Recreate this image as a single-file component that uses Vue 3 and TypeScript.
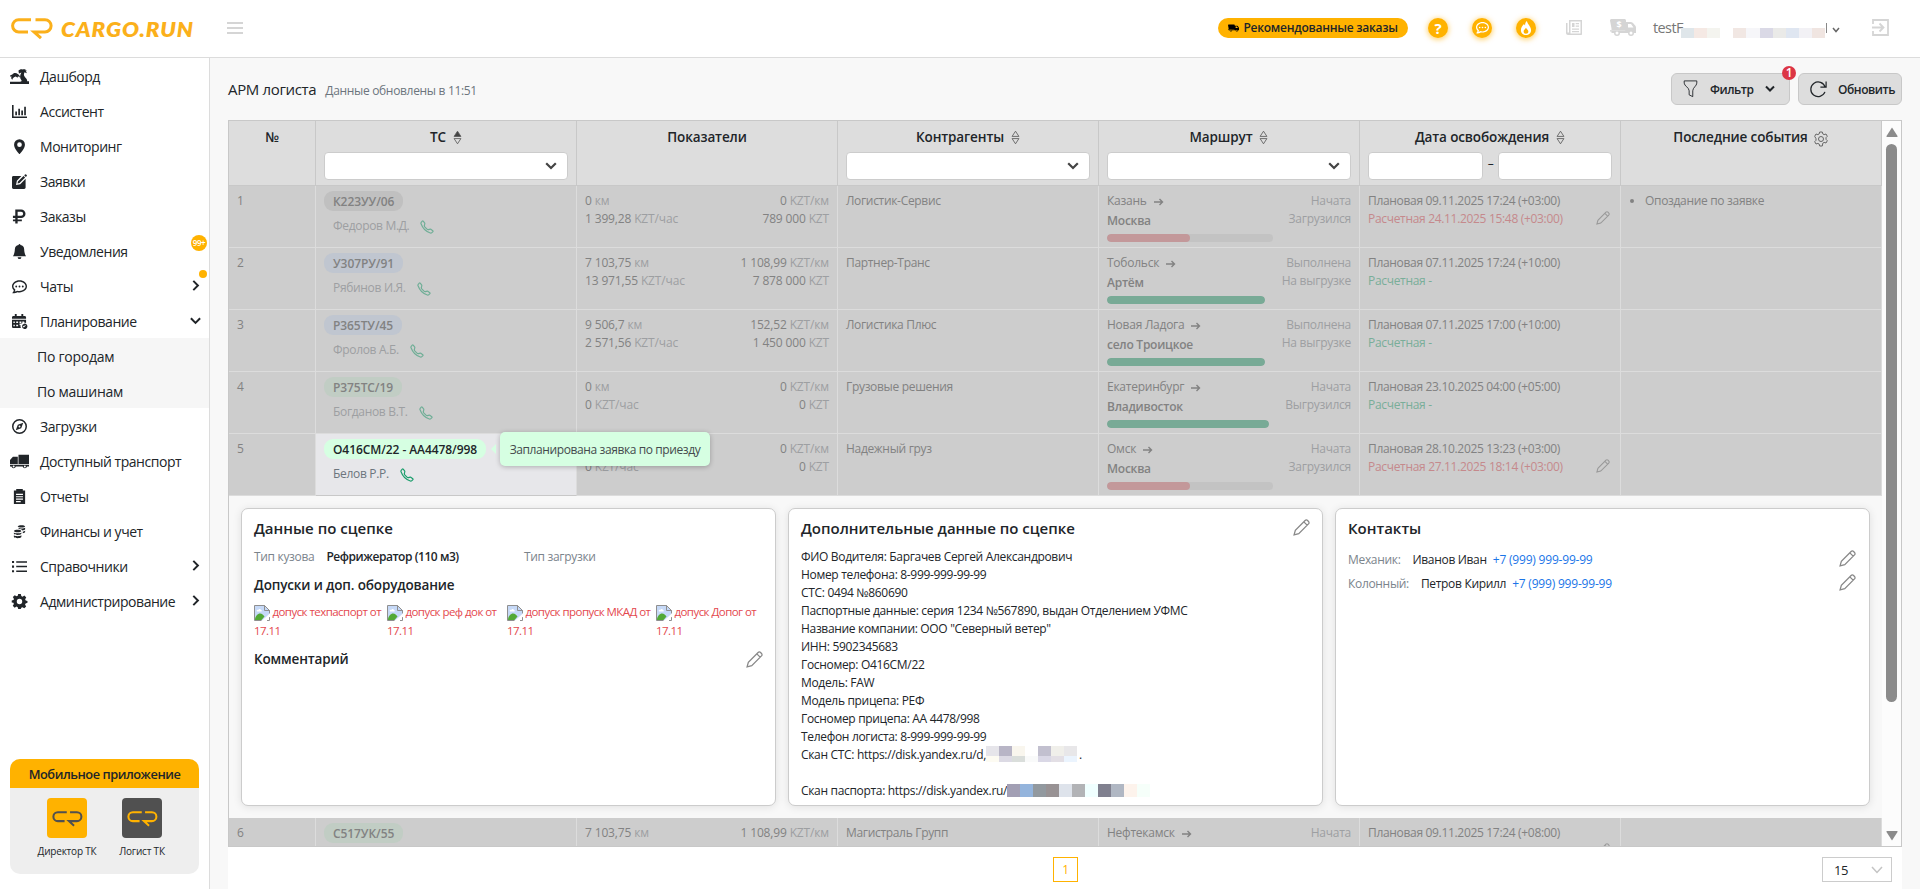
<template>
  <div class="app">
    <header class="header">
      <div class="brand">
        <svg class="brand-mark" viewBox="0 0 42 22" aria-hidden="true"><path :d="logoPath" /></svg>
        <span class="brand-name">CARGO.RUN</span>
      </div>
      <svg class="burger" viewBox="0 0 16 12" aria-hidden="true"><path d="M0 1h16M0 6h16M0 11h16" /></svg>
      <div class="header-right">
        <div class="recommend">
          <svg class="recommend-icon" viewBox="0 0 26 17" aria-hidden="true"><path :d="icons.truck" /></svg>
          <span>Рекомендованные заказы</span>
        </div>
        <span class="round question">?</span>
        <span class="round">
          <svg viewBox="0 0 16 16" width="13" height="13"><path :d="icons.chat" /></svg>
        </span>
        <span class="round">
          <svg viewBox="0 0 16 16" width="14" height="14"><path fill-rule="evenodd" :d="icons.fire" /></svg>
        </span>
        <svg class="news" viewBox="0 0 16 15" aria-hidden="true">
          <path fill-rule="evenodd" :d="icons.news" />
        </svg>
        <svg class="money-truck" viewBox="0 0 27 18" aria-hidden="true">
          <path fill-rule="evenodd" :d="icons.truck" />
          <text x="9" y="8.500">$</text>
        </svg>
        <div class="user">
          <span class="user-name">testF</span>
          <span class="mosaic user-mosaic">
            <i v-for="(c, i) in userMosaic" :key="i" :style="{ background: c }"></i>
          </span>
          <span class="user-tail"></span>
          <svg class="user-chevron" viewBox="0 0 8 6"><path d="M1 1l3 3.500L7 1" /></svg>
        </div>
        <svg class="exit" viewBox="0 0 17 17" aria-hidden="true">
          <path d="M1 5V1h15v15H1v-4M0 8.500h11M7.500 4.500l4 4-4 4" />
        </svg>
      </div>
    </header>

    <div class="body">
      <aside class="sidebar">
        <nav>
          <div
            v-for="item in menu"
            :key="item.label"
            class="menu-item"
            :class="{ sub: item.sub }"
          >
            <svg v-if="item.icon" class="menu-icon" :viewBox="item.box ?? '0 0 16 16'" :class="{ wide: item.box }">
              <path fill-rule="evenodd" :d="icons[item.icon]" />
            </svg>
            <span class="menu-label">{{ item.label }}</span>
            <svg v-if="item.arrow" class="menu-arrow" :class="item.arrow" viewBox="0 0 10 10">
              <path d="M3 .8L7.200 5 3 9.200" />
            </svg>
            <span v-if="item.badge" class="menu-badge">{{ item.badge }}</span>
            <span v-if="item.dot" class="menu-dot"></span>
          </div>
        </nav>
        <div class="mobile">
          <div class="mobile-title">Мобильное приложение</div>
          <div class="mobile-apps">
            <div v-for="a in apps" :key="a.name" class="mobile-app">
              <div class="mobile-logo" :class="a.theme">
                <svg viewBox="0 0 42 22"><path :d="logoPath" /></svg>
              </div>
              <span>{{ a.name }}</span>
            </div>
          </div>
        </div>
      </aside>

      <main class="content">
        <div class="toolbar">
          <h1>АРМ логиста</h1>
          <span class="updated">Данные обновлены в 11:51</span>
          <div class="toolbar-buttons">
            <button class="btn filter" type="button">
              <svg class="funnel" viewBox="0 0 16 20"><path d="M1 1h14v2.500c0 3-4.500 5-4.500 8.500v6.500l-4 -2V12C6.500 8.500 1 6.500 1 3.500z" /></svg>
              <span>Фильтр</span>
              <svg class="btn-chevron" viewBox="0 0 10 8"><path d="M1 1.500l4 4 4-4" /></svg>
              <span class="btn-badge">1</span>
            </button>
            <button class="btn refresh" type="button">
              <svg class="reload" viewBox="0 0 20 20"><path d="M16.800 12.500A7.700 7.700 0 1 1 17 7.500M18 1.500v6h-6" /></svg>
              <span>Обновить</span>
            </button>
          </div>
        </div>

        <section class="table">
          <div class="table-main">
            <div class="row head">
              <div v-for="col in columns" :key="col.title" class="cell">
                <div class="head-title">
                  <span>{{ col.title }}</span>
                  <svg v-if="col.sort" class="sort" viewBox="0 0 10 16">
                    <path d="M5 1l3.800 5.800H1.200z" :class="{ filled: col.sort === 'asc' }" />
                    <path d="M5 15L1.200 9.200h7.600z" />
                  </svg>
                  <svg v-if="col.gear" class="head-gear" viewBox="0 0 16 16">
                    <path :d="gearOutline" />
                    <circle cx="8" cy="8" r="2.500" />
                  </svg>
                </div>
                <div v-if="col.filter === 'select'" class="select">
                  <svg viewBox="0 0 12 8"><path d="M1.200 1.200L6 6l4.800-4.800" /></svg>
                </div>
                <div v-if="col.filter === 'range'" class="range">
                  <span class="input"></span>
                  <span class="dash">–</span>
                  <span class="input"></span>
                </div>
              </div>
            </div>

            <template v-for="r in rows" :key="r.n">
              <div class="row" :class="{ active: r.active }">
                <div class="cell num">{{ r.n }}</div>
                <div class="cell vehicle">
                  <span class="plate" :class="r.tone">
                    {{ r.plate }}
                    <span v-if="r.active" class="tooltip">Запланирована заявка по приезду</span>
                  </span>
                  <div v-if="r.driver" class="driver">
                    <span>{{ r.driver }}</span>
                    <svg viewBox="0 0 16 16"><path :d="phonePath" /></svg>
                  </div>
                </div>
                <div class="cell metrics">
                  <div><span>{{ r.km }} <em>км</em></span><span>{{ r.perKm }} <em>KZT/км</em></span></div>
                  <div v-if="r.total"><span>{{ r.perHour }} <em>KZT/час</em></span><span>{{ r.total }} <em>KZT</em></span></div>
                </div>
                <div class="cell">{{ r.client }}</div>
                <div class="cell route">
                  <div class="route-path">
                    <div class="from">
                      {{ r.from }}
                      <svg viewBox="0 0 10 8"><path d="M0 4h8.500M5.500 1l3 3-3 3" /></svg>
                    </div>
                    <template v-if="r.to">
                      <div class="to">{{ r.to }}</div>
                      <div class="track" :style="{ width: r.track + 'px' }">
                        <div class="fill" :class="r.late ? 'late' : 'ok'" :style="{ width: r.late ? '50%' : '100%' }"></div>
                      </div>
                    </template>
                  </div>
                  <div class="status">
                    <div>{{ r.state }}</div>
                    <div v-if="r.step">{{ r.step }}</div>
                  </div>
                </div>
                <div class="cell dates">
                  <div>Плановая {{ r.plan }}</div>
                  <div class="calc" :class="r.late ? 'late' : 'ok'">
                    <span v-if="r.calc">Расчетная {{ r.calc }}</span>
                    <svg v-if="r.late" class="pencil" viewBox="0 0 16 16"><path :d="pencilPath" /></svg>
                  </div>
                </div>
                <div class="cell events">
                  <ul v-if="r.event"><li>{{ r.event }}</li></ul>
                </div>
              </div>

              <div v-if="r.active" class="detail">
                <article class="card">
                  <h2>Данные по сцепке</h2>
                  <div class="body-type">
                    <div><span class="muted">Тип кузова</span><b>Рефрижератор (110 м3)</b></div>
                    <div><span class="muted">Тип загрузки</span></div>
                  </div>
                  <h3>Допуски и доп. оборудование</h3>
                  <div class="permits">
                    <div v-for="p in permits" :key="p.name" class="permit" :style="{ width: p.width + 'px' }">
                      <svg class="broken" viewBox="0 0 16 16">
                        <path d="M.5.5h10l5 5V9L9 15.500H.5z" fill="#c6d9f7" />
                        <path d="M1 15c0-4 3-6.500 5-6.500S9.500 10 10.500 11.500L7.500 15z" fill="#52a935" />
                        <path d="M3 6.500c-1-1.500.7-2.300 1.300-1.600C4.800 3.300 7 3.800 6.800 5c1.300-.1 1.400 1.500.4 1.500z" fill="#fff" />
                        <path d="M10.500.5l5 5h-5zM.5.500h10l5 5v3M.5.500v15h7M13 15.500h2.500V12" fill="none" stroke="#8f8f8f" />
                        <path d="M7.500 16L16 8.500v3L11.500 16z" fill="#fff" />
                      </svg>
                      допуск {{ p.name }} от<br />17.11
                    </div>
                  </div>
                  <div class="comment">
                    <h3>Комментарий</h3>
                    <svg class="pencil big" viewBox="0 0 16 16"><path :d="pencilPath" /></svg>
                  </div>
                </article>

                <article class="card">
                  <div class="card-head">
                    <h2>Дополнительные данные по сцепке</h2>
                    <svg class="pencil big" viewBox="0 0 16 16"><path :d="pencilPath" /></svg>
                  </div>
                  <div class="extra">
                    <div v-for="line in extra" :key="line">{{ line }}</div>
                    <div class="scan">
                      Скан СТС: https://disk.yandex.ru/d,
                      <span class="mosaic grid-mosaic">
                        <i v-for="(c, i) in scanMosaic" :key="i" :style="{ background: c }"></i>
                      </span>
                      <span class="scan-dot">.</span>
                    </div>
                    <div class="blank"></div>
                    <div class="scan">
                      Скан паспорта: https://disk.yandex.ru/
                      <span class="mosaic passport-mosaic">
                        <i v-for="(c, i) in passportMosaic" :key="i" :style="{ background: c }"></i>
                      </span>
                    </div>
                  </div>
                </article>

                <article class="card">
                  <h2>Контакты</h2>
                  <div class="contacts">
                    <div v-for="c in contacts" :key="c.role" class="contact">
                      <span class="muted">{{ c.role }}:</span>
                      <span class="contact-name">{{ c.name }}</span>
                      <a>+7 (999) 999-99-99</a>
                      <svg class="pencil big" viewBox="0 0 16 16"><path :d="pencilPath" /></svg>
                    </div>
                  </div>
                </article>
              </div>
            </template>
          </div>

          <div class="scrollbar">
            <svg viewBox="0 0 12 10"><path d="M6 .5L11.500 9a.7.7 0 0 1-.5 1H1a.7.7 0 0 1-.5-1z" /></svg>
            <div class="thumb"></div>
            <svg class="down" viewBox="0 0 12 10"><path d="M6 .5L11.500 9a.7.7 0 0 1-.5 1H1a.7.7 0 0 1-.5-1z" /></svg>
          </div>
        </section>

        <footer class="pager">
          <span class="page">1</span>
          <div class="page-size">
            <span>15</span>
            <svg viewBox="0 0 12 8"><path d="M1 1l5 5.500L11 1" /></svg>
          </div>
        </footer>
      </main>
    </div>
  </div>
</template>

<script setup lang="ts">
interface MenuItem {
  label: string;
  icon?: string;
  box?: string;
  sub?: boolean;
  arrow?: 'right' | 'down';
  badge?: string;
  dot?: boolean;
}

interface Column {
  title: string;
  sort?: 'asc' | 'none';
  filter?: 'select' | 'range';
  gear?: boolean;
}

interface Row {
  n: number;
  plate: string;
  tone: 'gray' | 'blue' | 'green';
  driver: string;
  km: string;
  perKm: string;
  perHour: string;
  total: string;
  client: string;
  from: string;
  to: string;
  track: number;
  state: string;
  step: string;
  plan: string;
  calc: string;
  late?: boolean;
  active?: boolean;
  event?: string;
}

const logoPath = 'M20 1.700H7.700a6.100 6.100 0 0 0 0 12.200H17M24.500 1.700H34a6.100 6.100 0 0 1 0 12.200H23l7 6.300';
const phonePath =
  'M3.700 1.300a.8.8 0 0 0-1.100 0L1.600 2.300C1 3 .9 3.700 1.200 4.300c1.700 4.800 5.700 8.900 10.600 10.600.6.200 1.300 0 1.800-.5l1.100-1.100a.8.8 0 0 0-.1-1.100l-2.300-1.700a.8.8 0 0 0-.6-.1l-2 .6c-.6.100-1.200 0-1.700-.5L5.400 7.900c-.4-.4-.6-1-.4-1.600l.5-2.100a.8.8 0 0 0-.1-.6z';
const pencilPath = 'M1 15l1.200-4.400L11.400 1.400a1.600 1.600 0 0 1 2.300 0l.9.9a1.600 1.600 0 0 1 0 2.300L5.400 13.800zM10.200 2.700l3.100 3.100';
const gearOutline =
  'M6.700 1h2.600l.5 1.900 1.300.7 1.900-.6 1.300 2.300-1.300 1.400v1.600l1.300 1.400L13 12l-1.900-.6-1.300.8L9.300 15H6.700l-.5-1.900-1.300-.7L3 13l-1.300-2.300L3 9.300V7.700L1.700 5.300 3 3l1.900.6 1.300-.7z';

const icons: Record<string, string> = {
  dash: 'M8 1.500C9 .3 10.500-.2 12 .3c1.500-.5 3.200 0 3.800 1.200l-1.600-.1c1.200.5 1.700 1.500 1.500 2.600l-1.900-1c-1 1.800-.8 3.400.5 4.700 1.200 1.200 2 2 2 3.800H18V14H0v-2h9.500c1.200 0 2-.6 1.200-1.600C9.300 8.800 9 6.300 10.800 3.300L8.500 4.200zM0 7c0-1 .8-1.800 2-1.600C3 3.600 5.700 3.300 7.300 4.600c1.600.8 2.200 2 2 3.300L7.600 6.800l-.5 1.500-1.600-1.200C3.500 7.500 2.500 8.700 2.300 10 .9 9.300 1 8 1.500 7z',
  chart: 'M0 1h1.700v12.300H16V15H0zM3.500 8h1.800v4H3.500zM6.700 5h1.800v7H6.700zM9.900 7h1.800v5H9.900zM13 3h1.800v9H13z',
  pin: 'M8 16s5.800-5.700 5.800-10A5.800 5.800 0 0 0 2.200 6C2.200 10.300 8 16 8 16zm0-7.500a2.500 2.500 0 1 1 0-5 2.500 2.500 0 0 1 0 5z',
  edit: 'M1.500 2H10L5.200 7.200 4.300 11.700 8.800 10.800 14.500 5v9.500c0 .8-.7 1.500-1.500 1.500H1.500C.7 16 0 15.300 0 14.500v-11C0 2.700.7 2 1.500 2zM6.300 8l6-6 1.700 1.700-6 6-2.100.4zM13 1.300l.9-.9a.8.800 0 0 1 1.100 0l.7.7a.8.800 0 0 1 0 1.100l-.9.9z',
  ruble: 'M3.500.5h6.300a4.600 4.600 0 0 1 0 9.200H6v1.500h4.500v1.800H6v2.500H3.500V13H1v-1.800h2.500V9.700H1V7.300h2.500zM6 2.900v4.400h3.700a2.200 2.200 0 0 0 0-4.400z',
  bell: 'M8 16a2 2 0 0 0 2-2H6a2 2 0 0 0 2 2zM9 1.100a1 1 0 1 0-2 0A5 5 0 0 0 3 6c0 1.100-.5 5-2 7h14c-1.500-2-2-5.900-2-7a5 5 0 0 0-4-4.900z',
  chat: 'M5.500 8a1 1 0 1 1-2 0 1 1 0 0 1 2 0zm3.500 0a1 1 0 1 1-2 0 1 1 0 0 1 2 0zm2.500 1a1 1 0 1 0 0-2 1 1 0 0 0 0 2zM1 15.300c1.800 0 3.600-.6 4.700-1.300.7.200 1.500.3 2.300.3 4.400 0 8-2.900 8-6.500S12.400 1.300 8 1.300 0 4.200 0 7.800c0 1.600.7 3.100 1.900 4.200-.2 1.200-.7 2-1.400 2.600-.3.300-.1.700.5.700zM3 13.300c.5-.8.6-1.600.6-2C2.300 10.400 1.500 9.200 1.500 7.800c0-2.700 2.900-5 6.500-5s6.500 2.300 6.500 5-2.900 5-6.500 5c-.9 0-1.700-.1-2.500-.4-.7.500-1.600.8-2.500.9z',
  calendar: 'M3 0h2v2h5V0h2v2h1.500C14.300 2 15 2.700 15 3.500V5H0V3.500C0 2.700.7 2 1.500 2H3zM0 6h15v3.500a4 4 0 0 0-2-.5V8h-2v1.600L10 10H8v2h1.200c-.3 1-.2 2 .3 3h-8C.7 15 0 14.300 0 13.500zM4.500 8v1.600h2V8zM8 8v1.600h2V8zM4.500 11.500v1.600h2v-1.600zM1.500 8v1.600H3V8zM1.500 11.500v1.600H3v-1.600zM13 10.300a2.900 2.900 0 1 1 0 5.700 2.900 2.900 0 0 1 0-5.700zM11.300 13l1.300 1.400 2.100-2.200-.6-.6-1.500 1.500-.7-.7z',
  compass: 'M8 0a8 8 0 1 1 0 16A8 8 0 0 1 8 0zm0 1.600a6.400 6.400 0 1 0 0 12.800A6.400 6.400 0 0 0 8 1.600zM12 4l-2.200 5.800L4 12l2.200-5.800zM8 7a1 1 0 1 0 0 2 1 1 0 0 0 0-2z',
  lorry: 'M8.700.3h10.800v9.400H8.700zM3 2.500h5v7.200H0V5.800zM0 10.500h19.500v1.800h-2a2.300 2.300 0 0 1-4.500 0H6a2.300 2.300 0 0 1-4.500 0H0zM3.750 11.300a1 1 0 1 0 0 2 1 1 0 0 0 0-2zM15.250 11.300a1 1 0 1 0 0 2 1 1 0 0 0 0-2z',
  report: 'M4.500 1.500V0h7v1.500H14V16H2V1.500zM4.300 5v1.300h7.400V5zM4.300 7.600v1.300h7.400V7.600zM4.300 10.200v1.300h7.400v-1.300zM4.300 12.800V14h5v-1.200z',
  coins: 'M6 2.500C7 .8 13.500.8 14 2.500c0 1.800-7.500 1.800-8 0zM14 4v1.500c-.3.800-1.500 1.200-3 1.300C10.600 5.700 9 5.200 7 5V4c1.500 1 5.500 1 7 0zM14 7v1.500c-.3.700-1.300 1.200-2.500 1.300V8.200c1 0 2-.4 2.500-1.200zM2 7.500C2.500 5.800 9.500 5.800 10 7.500c-.5 1.800-7.500 1.800-8 0zM2 9c1.500 1.300 6.500 1.300 8 0v1.500c-1 1.700-7 1.700-8 0zM2 12c1.500 1.300 6.500 1.300 8 0v1.800c-1 1.700-7 1.700-8 0z',
  list: 'M0 2h2.200v2.200H0zM4.500 2.300H16V4H4.500zM0 7h2.200v2.200H0zM4.500 7.200H16v1.700H4.500zM0 12h2.200v2.200H0zM4.500 12.200H16v1.700H4.500z',
  gear: 'M6.600 0h2.800l.5 2.200 1.300.6 2-1.200 2 2-1.200 2 .6 1.300 1.900.5v2l-2 .6-.6 1.300 1.200 2-2 2-2-1.200-1.200.6L9.400 16H6.600l-.5-2-1.300-.6-2 1.200-2-2 1.200-2-.5-1.200L-.3 9V7l1.900-.5.500-1.300-1.200-2 2-2 2 1.200 1.200-.5zM8 5.100a2.900 2.900 0 1 0 0 5.800 2.900 2.900 0 0 0 0-5.800z',
  truck: 'M0 1.500C0 .7.7 0 1.500 0h13c.8 0 1.500.7 1.500 1.500V3h4.500c1 0 1.800.3 2.500 1l2.200 2.500c.5.500.8 1.200.8 2V14h-2a3 3 0 0 1-6 0H10a3 3 0 0 1-6 0H1.500v-1.500H0v-1.200h15.200V11H1.500V9.500zM18 5v3.500h5.500L21 5zM7 12.500a1.500 1.500 0 1 0 0 3 1.500 1.500 0 0 0 0-3zM21 12.500a1.500 1.500 0 1 0 0 3 1.500 1.500 0 0 0 0-3z',
  fire: 'M8 16c3.300 0 5.800-2.300 5.800-5.500C13.800 6.500 10 4 9 0 7.500 1.200 6.800 3 7 5 6.300 4.700 6 4.300 5.700 3.500 3.500 5.500 2.200 8 2.200 10.500 2.200 13.700 4.700 16 8 16zM8 14.500c-1.600 0-2.700-1.100-2.700-2.600S6.600 9.600 8 7.600c1.200 2 2.700 2.800 2.700 4.300S9.600 14.500 8 14.500z',
  news: 'M3 0h13v14c0 .6-.4 1-1 1H2c-1.100 0-2-.9-2-2V3h1.500v9.500h1.500zM4.500 1.500v12h10v-12zM6 3h2.500v4H6zM9.700 3H13v1.300H9.700zM9.700 5.500H13v1.300H9.700zM6 8.500h7v1.300H6zM6 11h7v1.300H6z',
};

const menu: MenuItem[] = [
  { label: 'Дашборд', icon: 'dash', box: '0 0 18 14' },
  { label: 'Ассистент', icon: 'chart' },
  { label: 'Мониторинг', icon: 'pin' },
  { label: 'Заявки', icon: 'edit' },
  { label: 'Заказы', icon: 'ruble' },
  { label: 'Уведомления', icon: 'bell', badge: '99+' },
  { label: 'Чаты', icon: 'chat', arrow: 'right', dot: true },
  { label: 'Планирование', icon: 'calendar', arrow: 'down' },
  { label: 'По городам', sub: true },
  { label: 'По машинам', sub: true },
  { label: 'Загрузки', icon: 'compass' },
  { label: 'Доступный транспорт', icon: 'lorry', box: '0 0 19.5 14.5' },
  { label: 'Отчеты', icon: 'report' },
  { label: 'Финансы и учет', icon: 'coins' },
  { label: 'Справочники', icon: 'list', arrow: 'right' },
  { label: 'Администрирование', icon: 'gear', arrow: 'right' },
];

const apps = [
  { name: 'Директор ТК', theme: 'yellow' },
  { name: 'Логист ТК', theme: 'dark' },
];

const columns: Column[] = [
  { title: '№' },
  { title: 'ТС', sort: 'asc', filter: 'select' },
  { title: 'Показатели' },
  { title: 'Контрагенты', sort: 'none', filter: 'select' },
  { title: 'Маршрут', sort: 'none', filter: 'select' },
  { title: 'Дата освобождения', sort: 'none', filter: 'range' },
  { title: 'Последние события', gear: true },
];

const rows: Row[] = [
  {
    n: 1, plate: 'К223УУ/06', tone: 'gray', driver: 'Федоров М.Д.',
    km: '0', perKm: '0', perHour: '1 399,28', total: '789 000', client: 'Логистик-Сервис',
    from: 'Казань', to: 'Москва', track: 166, state: 'Начата', step: 'Загрузился',
    plan: '09.11.2025 17:24 (+03:00)', calc: '24.11.2025 15:48 (+03:00)', late: true, event: 'Опоздание по заявке',
  },
  {
    n: 2, plate: 'У307РУ/91', tone: 'blue', driver: 'Рябинов И.Я.',
    km: '7 103,75', perKm: '1 108,99', perHour: '13 971,55', total: '7 878 000', client: 'Партнер-Транс',
    from: 'Тобольск', to: 'Артём', track: 158, state: 'Выполнена', step: 'На выгрузке',
    plan: '07.11.2025 17:24 (+10:00)', calc: '-',
  },
  {
    n: 3, plate: 'Р365ТУ/45', tone: 'blue', driver: 'Фролов А.Б.',
    km: '9 506,7', perKm: '152,52', perHour: '2 571,56', total: '1 450 000', client: 'Логистика Плюс',
    from: 'Новая Ладога', to: 'село Троицкое', track: 158, state: 'Выполнена', step: 'На выгрузке',
    plan: '07.11.2025 17:00 (+10:00)', calc: '-',
  },
  {
    n: 4, plate: 'Р375ТС/19', tone: 'green', driver: 'Богданов В.Т.',
    km: '0', perKm: '0', perHour: '0', total: '0', client: 'Грузовые решения',
    from: 'Екатеринбург', to: 'Владивосток', track: 162, state: 'Начата', step: 'Выгрузился',
    plan: '23.10.2025 04:00 (+05:00)', calc: '-',
  },
  {
    n: 5, plate: 'О416СМ/22 - АА4478/998', tone: 'green', driver: 'Белов Р.Р.',
    km: '0', perKm: '0', perHour: '0', total: '0', client: 'Надежный груз',
    from: 'Омск', to: 'Москва', track: 166, state: 'Начата', step: 'Загрузился',
    plan: '28.10.2025 13:23 (+03:00)', calc: '27.11.2025 18:14 (+03:00)', late: true, active: true,
  },
  {
    n: 6, plate: 'С517УК/55', tone: 'green', driver: '',
    km: '7 103,75', perKm: '1 108,99', perHour: '', total: '', client: 'Магистраль Групп',
    from: 'Нефтекамск', to: '', track: 166, state: 'Начата', step: '',
    plan: '09.11.2025 17:24 (+08:00)', calc: '', late: true,
  },
];

const permits = [
  { name: 'техпаспорт', width: 133 },
  { name: 'реф док', width: 120 },
  { name: 'пропуск МКАД', width: 149 },
  { name: 'Допог', width: 107 },
];

const extra = [
  'ФИО Водителя: Баргачев Сергей Александрович',
  'Номер телефона: 8-999-999-99-99',
  'СТС: 0494 №860690',
  'Паспортные данные: серия 1234 №567890, выдан Отделением УФМС',
  'Название компании: ООО "Северный ветер"',
  'ИНН: 5902345683',
  'Госномер: О416СМ/22',
  'Модель: FAW',
  'Модель прицепа: РЕФ',
  'Госномер прицепа: АА 4478/998',
  'Телефон логиста: 8-999-999-99-99',
];

const contacts = [
  { role: 'Механик', name: 'Иванов Иван' },
  { role: 'Колонный', name: 'Петров Кирилл' },
];

const userMosaic = [
  '#dfe6ea', '#f5e9e4', '#f4f4ef', '#ffffff', '#f1e7e3', '#f6f6f9', '#dad9e6', '#eaeae8', '#dfe6f1', '#f2f1f5', '#f0e5e1',
];
const scanMosaic = [
  '#e6e5ea', '#b8b5c6', '#f9f6ee', '#ffffff', '#c2c0cf', '#f0efea', '#e8e7e9',
  '#fdfbf2', '#dcdae4', '#dadedb', '#f9fafa', '#dad8e6', '#e3dfe5', '#ebf4fe',
];
const passportMosaic = [
  '#a29fb4', '#94b4dc', '#92999f', '#989294', '#dee3eb', '#b2b3b6', '#f0ffff', '#80808f', '#b0b7c3', '#fdf3ec', '#f6fffa',
];
</script>

<style>
body {
  overflow: hidden;
}
</style>

<style scoped>
.app {
  display: flex;
  flex-direction: column;
  height: 100vh;
  font-family: 'Open Sans', 'Noto Sans', sans-serif;
  font-size: 12px;
  letter-spacing: -0.32px;
  color: #212529;
  background: #f8f8f8;
  box-sizing: border-box;
}
.app *,
.app *::before,
.app *::after {
  box-sizing: border-box;
}
svg {
  display: block;
  flex: none;
}
h1,
h2,
h3,
ul {
  margin: 0;
  padding: 0;
}
.header {
  display: flex;
  align-items: center;
  flex: none;
  height: 58px;
  padding: 0 31px 2px 12px;
  background: #fff;
  border-bottom: 1px solid #dcdcdc;
}
.brand {
  display: flex;
  align-items: center;
  width: 215px;
}
.brand-mark {
  width: 42px;
  height: 22px;
  margin: 2px 8px 0 -1px;
  fill: none;
  stroke: #fbb01b;
  stroke-width: 3;
}
.brand-name {
  margin-top: 2px;
  font: italic 800 20px/28px Lato, sans-serif;
  letter-spacing: 0.8px;
  color: #fbb01b;
  transform: scaleX(1.12);
  transform-origin: left;
}
.burger {
  width: 16px;
  height: 12px;
  stroke: #d5d5d5;
  stroke-width: 1.800;
}
.header-right {
  display: flex;
  align-items: center;
  margin-left: auto;
}
.recommend {
  display: flex;
  align-items: center;
  justify-content: center;
  gap: 4px;
  width: 190px;
  height: 20px;
  margin-right: 20px;
  border-radius: 10px;
  background: #ffb200;
  font-size: 12px;
  font-weight: 600;
  letter-spacing: -0.25px;
  line-height: 20px;
  white-space: nowrap;
}
.recommend-icon {
  width: 11px;
  height: 8px;
}
.round {
  display: flex;
  align-items: center;
  justify-content: center;
  width: 20px;
  height: 20px;
  margin-right: 24px;
  border-radius: 50%;
  background: #ffb200;
  color: #fff;
  fill: #fff;
  box-shadow: 0 1px 5px 1px rgba(255, 178, 0, 0.5);
}
.question {
  font-size: 15px;
  font-weight: 700;
}
.news {
  width: 16px;
  height: 15px;
  margin: 0 28px 0 6px;
  fill: #d5d5d5;
}
.money-truck {
  width: 27px;
  height: 18px;
  margin-right: 16px;
  fill: #d5d5d5;
}
.money-truck text {
  fill: #fff;
  font-size: 9px;
  font-weight: 700;
  text-anchor: middle;
}
.user {
  display: flex;
  align-items: center;
  width: 187px;
  margin-right: 32px;
  font-size: 14.500px;
  color: #777;
}
.user-name {
  width: 28px;
  letter-spacing: -0.6px;
}
.mosaic {
  display: inline-flex;
}
.mosaic i {
  display: block;
  flex: none;
}
.user-mosaic {
  z-index: 1;
  margin: 10px 0 0;
}
.user-mosaic i {
  width: 13.100px;
  height: 10px;
}
.user-tail {
  width: 1px;
  height: 10px;
  margin-left: 1px;
  background: #888;
}
.user-chevron {
  width: 8px;
  height: 6px;
  margin: 4px 0 0 5px;
  fill: none;
  stroke: #666;
  stroke-width: 1.500;
}
.exit {
  width: 17px;
  height: 17px;
  fill: none;
  stroke: #d5d5d5;
  stroke-width: 1.800;
}
.body {
  display: flex;
  flex: 1;
  min-height: 0;
}
.sidebar {
  display: flex;
  flex-direction: column;
  justify-content: space-between;
  flex: none;
  width: 210px;
  padding-bottom: 15px;
  background: #fff;
  border-right: 1px solid #dcdcdc;
}
.menu-item {
  position: relative;
  display: flex;
  align-items: center;
  height: 35px;
  padding: 1px 0 0 12px;
  font-size: 14px;
  letter-spacing: -0.46px;
}
.menu-item.sub {
  padding-left: 37px;
  background: #f6f6f6;
  letter-spacing: -0.25px;
}
.menu-icon {
  width: 15px;
  height: 15px;
  margin-right: 13px;
  overflow: visible;
  fill: #212529;
}
.menu-icon.wide {
  width: 19px;
  height: 15px;
  margin: 0 11px 0 -2px;
}
.menu-arrow {
  position: absolute;
  top: 12px;
  right: 8px;
  width: 11px;
  height: 11px;
  fill: none;
  stroke: #212529;
  stroke-width: 1.800;
}
.menu-arrow.down {
  transform: rotate(90deg);
}
.menu-badge {
  position: absolute;
  top: 2px;
  right: 2px;
  width: 16px;
  height: 16px;
  border-radius: 50%;
  background: #ffb200;
  color: #fff;
  font-size: 8px;
  font-weight: 600;
  line-height: 16px;
  text-align: center;
}
.menu-dot {
  position: absolute;
  top: 2px;
  right: 2px;
  width: 8px;
  height: 8px;
  border-radius: 50%;
  background: #ffb200;
}
.mobile {
  height: 115px;
  margin: 0 10px;
  overflow: hidden;
  border-radius: 10px;
  background: #eee;
}
.mobile-title {
  height: 29px;
  background: #ffb200;
  font-size: 12.800px;
  font-weight: 600;
  line-height: 31px;
  text-align: center;
  letter-spacing: -0.45px;
}
.mobile-apps {
  display: flex;
  justify-content: center;
  padding-top: 10px;
}
.mobile-app {
  display: flex;
  flex-direction: column;
  align-items: center;
  width: 75px;
  font-size: 10px;
  line-height: 26px;
  letter-spacing: -0.2px;
}
.mobile-logo {
  display: flex;
  align-items: center;
  justify-content: center;
  width: 40px;
  height: 40px;
  border-radius: 4px;
  fill: none;
  stroke-width: 2.800;
}
.mobile-logo svg {
  width: 31px;
  height: 16px;
  margin-top: 2px;
}
.mobile-logo.yellow {
  background: #ffb200;
  stroke: #505050;
}
.mobile-logo.dark {
  background: #505050;
  stroke: #ffb200;
}
.content {
  display: flex;
  flex-direction: column;
  flex: 1;
  padding: 0 18px;
}
.toolbar {
  display: flex;
  align-items: center;
  height: 62px;
}
.toolbar h1 {
  font-size: 15px;
  font-weight: 400;
  letter-spacing: -0.35px;
}
.updated {
  margin: 2px 0 0 9px;
  color: #6c757d;
}
.toolbar-buttons {
  display: flex;
  gap: 8px;
  margin-left: auto;
}
.btn {
  position: relative;
  display: flex;
  align-items: center;
  height: 32px;
  padding: 0 11px;
  border: 1px solid #c8c8c8;
  border-radius: 6px;
  background: #ddd;
  color: #212529;
  font: 600 12px 'Open Sans', sans-serif;
  letter-spacing: -0.45px;
}
.btn.filter {
  width: 119px;
}
.btn.refresh {
  width: 104px;
}
.btn svg {
  fill: none;
  stroke: #212529;
}
.funnel {
  width: 15px;
  height: 18px;
  margin-right: 12px;
}
.btn-chevron {
  width: 10px;
  height: 8px;
  margin-left: auto;
  margin-right: 3px;
  stroke-width: 2;
}
.reload {
  width: 19px;
  height: 19px;
  margin: 0 10px 0 -1px;
  stroke-width: 1.300;
}
.btn-badge {
  position: absolute;
  top: -8px;
  right: -7px;
  width: 14px;
  height: 14px;
  border-radius: 50%;
  background: #dc3545;
  color: #fff;
  font-size: 12px;
  line-height: 14px;
  text-align: center;
}
.table {
  display: flex;
  height: 727px;
  overflow: hidden;
  border: 1px solid #c8c8c8;
}
.table-main {
  width: 1653px;
}
.row {
  display: grid;
  grid-template-columns: 87px repeat(6, 261px);
  height: 62px;
  background: #cdcdcd;
  color: #828282;
}
.cell {
  padding: 6px 8px 0;
  border-right: 1px solid #dcdcdc;
  border-bottom: 1px solid #dcdcdc;
  line-height: 18px;
  white-space: nowrap;
}
.row.head {
  height: 65px;
  background: #ddd;
  color: #212529;
}
.head .cell {
  padding-top: 7px;
  border-color: #c8c8c8;
}
.head-title {
  display: flex;
  align-items: center;
  justify-content: center;
  gap: 7px;
  height: 18px;
  margin-bottom: 6px;
  font-size: 13.500px;
  font-weight: 600;
  letter-spacing: -0.12px;
}
.sort {
  width: 9px;
  height: 15px;
  fill: none;
  stroke: #555;
  stroke-width: 0.900;
}
.sort .filled {
  fill: #444;
}
.head-gear {
  width: 16px;
  height: 16px;
  margin: 3px 0 0 -2px;
  fill: none;
  stroke: #666;
}
.select,
.input {
  height: 28px;
  border: 1px solid #ccc;
  border-radius: 4px;
  background: #fff;
}
.select {
  display: flex;
  align-items: center;
  justify-content: flex-end;
  padding-right: 10px;
}
.select svg {
  width: 12px;
  height: 8px;
  fill: none;
  stroke: #444;
  stroke-width: 2.200;
}
.range {
  display: flex;
  justify-content: space-between;
}
.range .input {
  width: 115px;
}
.range .input:last-child {
  width: 114px;
}
.dash {
  line-height: 24px;
}
.vehicle {
  padding-top: 5px;
}
.plate {
  position: relative;
  display: inline-block;
  height: 20px;
  padding: 0 9px;
  border-radius: 9px;
  font-weight: 600;
  line-height: 21px;
  letter-spacing: -0.08px;
  vertical-align: top;
}
.plate.gray {
  background: #c0c0c0;
}
.plate.blue {
  background: #c0c6d0;
}
.plate.green {
  background: #c1cdc4;
}
.driver {
  display: flex;
  align-items: center;
  gap: 11px;
  height: 20px;
  margin-top: 5px;
  padding-left: 9px;
  color: #9d9fa2;
}
.driver svg {
  width: 14px;
  height: 14px;
  margin-top: 2px;
  fill: none;
  stroke: #6fae96;
  stroke-width: 1.300;
}
.active .vehicle {
  background: #e7e7ea;
  border-bottom-color: #c8c8c8;
}
.active .plate {
  background: #d6ffe2;
  color: #212529;
}
.active .driver {
  color: #6c757d;
}
.active .driver svg {
  stroke: #199d6b;
}
.tooltip {
  position: absolute;
  top: -7px;
  left: calc(100% + 14px);
  z-index: 2;
  width: 210px;
  height: 34px;
  border-radius: 5px;
  background: #d6ffe2;
  box-shadow: 0 1px 5px rgba(0, 0, 0, 0.25);
  color: #444a4d;
  font-weight: 400;
  line-height: 35px;
  letter-spacing: -0.4px;
  text-align: center;
}
.tooltip::before {
  content: '';
  position: absolute;
  top: 12px;
  left: -9px;
  border: 5px solid transparent;
  border-left-width: 0;
  border-right-color: #d6ffe2;
}
.metrics {
  letter-spacing: -0.15px;
}
.metrics div {
  display: flex;
  justify-content: space-between;
}
em {
  color: #9d9fa2;
  font-style: normal;
}
.route {
  display: flex;
  justify-content: space-between;
  letter-spacing: -0.25px;
}
.from {
  display: flex;
  align-items: center;
  gap: 7px;
}
.from svg {
  width: 10px;
  height: 8px;
  margin-top: 2px;
  fill: none;
  stroke: #828282;
  stroke-width: 1.400;
}
.to {
  height: 18px;
  margin-top: 2px;
  font-weight: 600;
}
.track {
  height: 8px;
  margin-top: 4px;
  overflow: hidden;
  border-radius: 4px;
  background: #c3c3c3;
}
.fill {
  height: 100%;
  border-radius: 4px;
}
.fill.late {
  background: #c3989a;
}
.fill.ok {
  background: #78aa96;
}
.status {
  color: #9d9fa2;
  text-align: right;
}
.calc {
  display: flex;
  justify-content: space-between;
  min-height: 18px;
}
.calc .pencil {
  margin-left: auto;
}
.calc.late {
  color: #c5898c;
}
.calc.ok {
  color: #79ae99;
}
.pencil {
  width: 14px;
  height: 14px;
  margin: 1px 2px 0 0;
  fill: none;
  stroke: #999;
  stroke-width: 1.200;
}
.pencil.big {
  width: 17px;
  height: 17px;
  margin: 0;
  stroke: #888;
}
.events ul {
  padding-left: 16px;
}
.detail {
  display: grid;
  grid-template-columns: repeat(3, 535px);
  gap: 12px;
  height: 322px;
  padding: 12px 12px;
}
.card {
  height: 298px;
  padding: 9px 12px;
  border: 1px solid #ccc;
  border-radius: 7px;
  background: #fff;
  box-shadow: 0 1px 8px rgba(0, 0, 0, 0.1);
}
.card h2 {
  font-size: 15px;
  font-weight: 600;
  line-height: 20px;
  letter-spacing: 0;
}
.card h3 {
  font-size: 13.500px;
  font-weight: 600;
  line-height: 18px;
  letter-spacing: -0.15px;
}
.muted {
  color: #7b848c;
}
.body-type {
  display: flex;
  height: 18px;
  margin: 10px 0 10px;
  line-height: 18px;
}
.body-type div {
  flex: none;
  width: 270px;
}
.body-type div:last-child {
  width: auto;
}
.body-type b {
  margin-left: 12px;
  font-weight: 600;
  letter-spacing: -0.45px;
}
.permits {
  display: flex;
  margin: 8px 0 9px;
  font-size: 11.500px;
  line-height: 19px;
  letter-spacing: -0.55px;
  color: #e4484e;
}
.permit {
  flex: none;
  white-space: nowrap;
}
.broken {
  display: inline-block;
  width: 16px;
  height: 16px;
  vertical-align: -5px;
}
.comment,
.card-head {
  display: flex;
  align-items: center;
  justify-content: space-between;
}
.comment {
  padding-top: 1px;
}
.card-head .pencil {
  margin-top: -2px;
}
.extra {
  margin-top: 10px;
  line-height: 18px;
  white-space: nowrap;
}
.blank {
  height: 18px;
}
.scan {
  display: flex;
  height: 18px;
}
.grid-mosaic {
  flex-wrap: wrap;
  width: 91px;
  height: 16px;
}
.grid-mosaic i {
  width: 13px;
  height: 10px;
}
.grid-mosaic i:nth-child(n + 8) {
  height: 6px;
}
.scan-dot {
  margin-left: 2px;
}
.passport-mosaic i {
  width: 13px;
  height: 13px;
  margin-top: 2px;
}
.contacts {
  margin-top: 9px;
}
.contact {
  display: flex;
  align-items: center;
  height: 24px;
}
.contact-name {
  margin: 0 6px 0 12px;
}
.contact a {
  color: #1a75e8;
  letter-spacing: -0.2px;
}
.contact .pencil {
  margin: -1px 1px 0 auto;
}
.scrollbar {
  display: flex;
  flex-direction: column;
  align-items: center;
  flex: 1;
  padding: 6px 0 5px;
  background: #fcfcfc;
  fill: #8b8b8b;
}
.scrollbar svg {
  width: 12px;
  height: 10px;
}
.scrollbar .down {
  margin-top: auto;
  transform: rotate(180deg);
}
.thumb {
  width: 11px;
  height: 558px;
  margin-top: 7px;
  border-radius: 6px;
  background: #8b8b8b;
}
.pager {
  display: flex;
  align-items: center;
  flex: 1;
  padding: 3px 10px 0 825px;
  background: #fff;
}
.page {
  width: 25px;
  height: 25px;
  border: 1px solid #ffb200;
  color: #ffb200;
  line-height: 24px;
  text-align: center;
}
.page-size {
  display: flex;
  align-items: center;
  justify-content: space-between;
  width: 70px;
  height: 25px;
  margin-left: auto;
  padding: 0 8px 0 11px;
  border: 1px solid #ccc;
  font-size: 13px;
}
.page-size svg {
  width: 12px;
  height: 8px;
  fill: none;
  stroke: #c4c4c4;
  stroke-width: 1.500;
}
</style>
